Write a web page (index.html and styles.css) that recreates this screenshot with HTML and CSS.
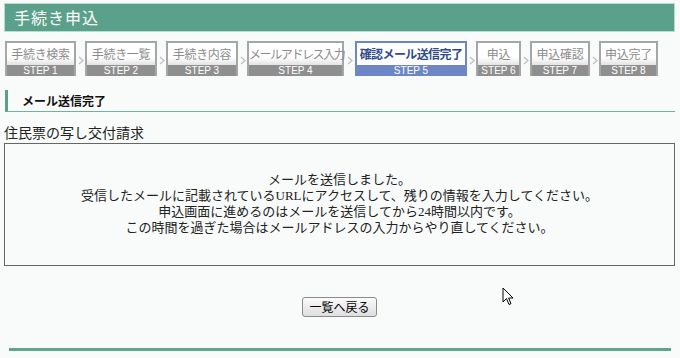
FILE: index.html
```html
<!DOCTYPE html>
<html lang="ja">
<head>
  <meta charset="UTF-8">
  <title>手続き申込</title>
  <link rel="stylesheet" href="styles.css">
</head>

<body>
  <div class="page">
    <h1 class="title">手続き申込</h1>

    <div class="steps">
      <div class="step step-1"><span class="step-name">手続き検索</span><span class="step-num">STEP 1</span></div>
      <span class="sep"><svg width="6" height="9" viewBox="0 0 6 9"><polyline points="1,1 5,4.5 1,8" fill="none" stroke="#bdbdbd" stroke-width="1.2"/></svg></span>
      <div class="step step-2"><span class="step-name">手続き一覧</span><span class="step-num">STEP 2</span></div>
      <span class="sep"><svg width="6" height="9" viewBox="0 0 6 9"><polyline points="1,1 5,4.5 1,8" fill="none" stroke="#bdbdbd" stroke-width="1.2"/></svg></span>
      <div class="step step-3"><span class="step-name">手続き内容</span><span class="step-num">STEP 3</span></div>
      <span class="sep"><svg width="6" height="9" viewBox="0 0 6 9"><polyline points="1,1 5,4.5 1,8" fill="none" stroke="#bdbdbd" stroke-width="1.2"/></svg></span>
      <div class="step step-4"><span class="step-name">メールアドレス入力</span><span class="step-num">STEP 4</span></div>
      <span class="sep sep-wide"><svg width="6" height="9" viewBox="0 0 6 9"><polyline points="1,1 5,4.5 1,8" fill="none" stroke="#bdbdbd" stroke-width="1.2"/></svg></span>
      <div class="step step-5 active"><span class="step-name">確認メール送信完了</span><span class="step-num">STEP 5</span></div>
      <span class="sep"><svg width="6" height="9" viewBox="0 0 6 9"><polyline points="1,1 5,4.5 1,8" fill="none" stroke="#bdbdbd" stroke-width="1.2"/></svg></span>
      <div class="step step-6"><span class="step-name">申込</span><span class="step-num">STEP 6</span></div>
      <span class="sep"><svg width="6" height="9" viewBox="0 0 6 9"><polyline points="1,1 5,4.5 1,8" fill="none" stroke="#bdbdbd" stroke-width="1.2"/></svg></span>
      <div class="step step-7"><span class="step-name">申込確認</span><span class="step-num">STEP 7</span></div>
      <span class="sep"><svg width="6" height="9" viewBox="0 0 6 9"><polyline points="1,1 5,4.5 1,8" fill="none" stroke="#bdbdbd" stroke-width="1.2"/></svg></span>
      <div class="step step-8"><span class="step-name">申込完了</span><span class="step-num">STEP 8</span></div>
    </div>

    <h2 class="section-title">メール送信完了</h2>

    <div class="form-name">住民票の写し交付請求</div>
    <div class="message">
      <p>メールを送信しました。</p>
      <p>受信したメールに記載されている<span class="latin">URL</span>にアクセスして、残りの情報を入力してください。</p>
      <p>申込画面に進めるのはメールを送信してから<span class="latin">24</span>時間以内です。</p>
      <p>この時間を過ぎた場合はメールアドレスの入力からやり直してください。</p>
    </div>

    <div class="actions">
      <button type="button" class="back-button">一覧へ戻る</button>
    </div>

    <div class="footer-line"></div>
  </div>

  <svg class="cursor" width="12" height="19" viewBox="0 0 12 19">
    <path d="M1 1 L1 15 L4.5 11.5 L7 17.5 L9 16.6 L6.6 11 L11 11 Z" fill="#fff" stroke="#000" stroke-width="1" stroke-linejoin="round"/>
  </svg>
</body>
</html>
```

FILE: styles.css
```css
body {
  margin: 0;
  background-color: #f8fbf9;
  font-family: "Noto Sans CJK JP", sans-serif;
  color: #222;
}

.page {
  padding: 3px 5px 0 4px;
}

.title {
  margin: 0;
  height: 27px;
  padding-left: 9px;
  background-color: #5aa08a;
  border: 1px solid #b9dccf;
  color: #fff;
  font-size: 16px;
  font-weight: normal;
  letter-spacing: 1px;
  line-height: 27px;
}

.steps {
  display: flex;
  align-items: flex-start;
  margin: 9px 0 0 1px;
}

.step {
  display: flex;
  flex-direction: column;
  height: 35px;
  box-sizing: border-box;
  border: 2px solid #a6a6a6;
  border-bottom: none;
  text-align: center;
  white-space: nowrap;
}

.step-name {
  height: 22px;
  line-height: 21px;
  background: linear-gradient(#fff 65%, #e3e3e3 100%);
  color: #8c8c8c;
  font-size: 12px;
  letter-spacing: -0.3px;
}

.step-num {
  height: 11px;
  line-height: 11px;
  background-color: #8f8f8f;
  color: #fff;
  font-family: "Liberation Sans", sans-serif;
  font-size: 10px;
}

.step-1 { width: 71px; }
.step-2 { width: 72px; }
.step-3 { width: 72px; }
.step-4 { width: 97px; }
.step-4 .step-name { letter-spacing: -1.4px; }
.step-5 { width: 112px; }
.step-6 { width: 45px; }
.step-7 { width: 60px; }
.step-8 { width: 59px; }

.step.active {
  border-color: #6d87c6;
}

.step.active .step-name {
  background: #fff;
  color: #2f4b8e;
  font-weight: bold;
  letter-spacing: -0.6px;
}

.step.active .step-num {
  background-color: #6d87c6;
}

.sep {
  display: flex;
  justify-content: center;
  width: 9px;
  padding-top: 15px;
}

.sep-wide {
  width: 11px;
}

.section-title {
  margin: 14px 0 0 1px;
  height: 21px;
  padding-left: 14px;
  border-left: 3px solid #5aa08a;
  border-bottom: 1px solid #6cb3a0;
  color: #111;
  font-size: 12px;
  font-weight: bold;
  line-height: 21px;
}

.form-name {
  margin-top: 11px;
  padding-bottom: 2px;
  font-size: 14px;
  line-height: 18px;
  color: #222;
}

.message {
  height: 123px;
  padding-top: 27px;
  box-sizing: border-box;
  border: 1px solid #666;
  text-align: center;
  font-size: 13px;
  line-height: 16px;
}

.message p {
  margin: 0;
}

.latin {
  font-family: "Liberation Serif", serif;
  line-height: 1;
}

.actions {
  display: flex;
  justify-content: center;
  margin-top: 31px;
}

.back-button {
  width: 75px;
  height: 20px;
  padding: 0;
  border: 1px solid #8a8a8a;
  border-radius: 3px;
  background: linear-gradient(#fbfbfb, #dedede);
  color: #000;
  font-family: "Noto Sans CJK JP", sans-serif;
  font-size: 12px;
  line-height: 18px;
}

.footer-line {
  height: 3px;
  margin: 31px 4px 0 5px;
  background-color: #5fa690;
}

.cursor {
  position: absolute;
  left: 502px;
  top: 287px;
}
```
